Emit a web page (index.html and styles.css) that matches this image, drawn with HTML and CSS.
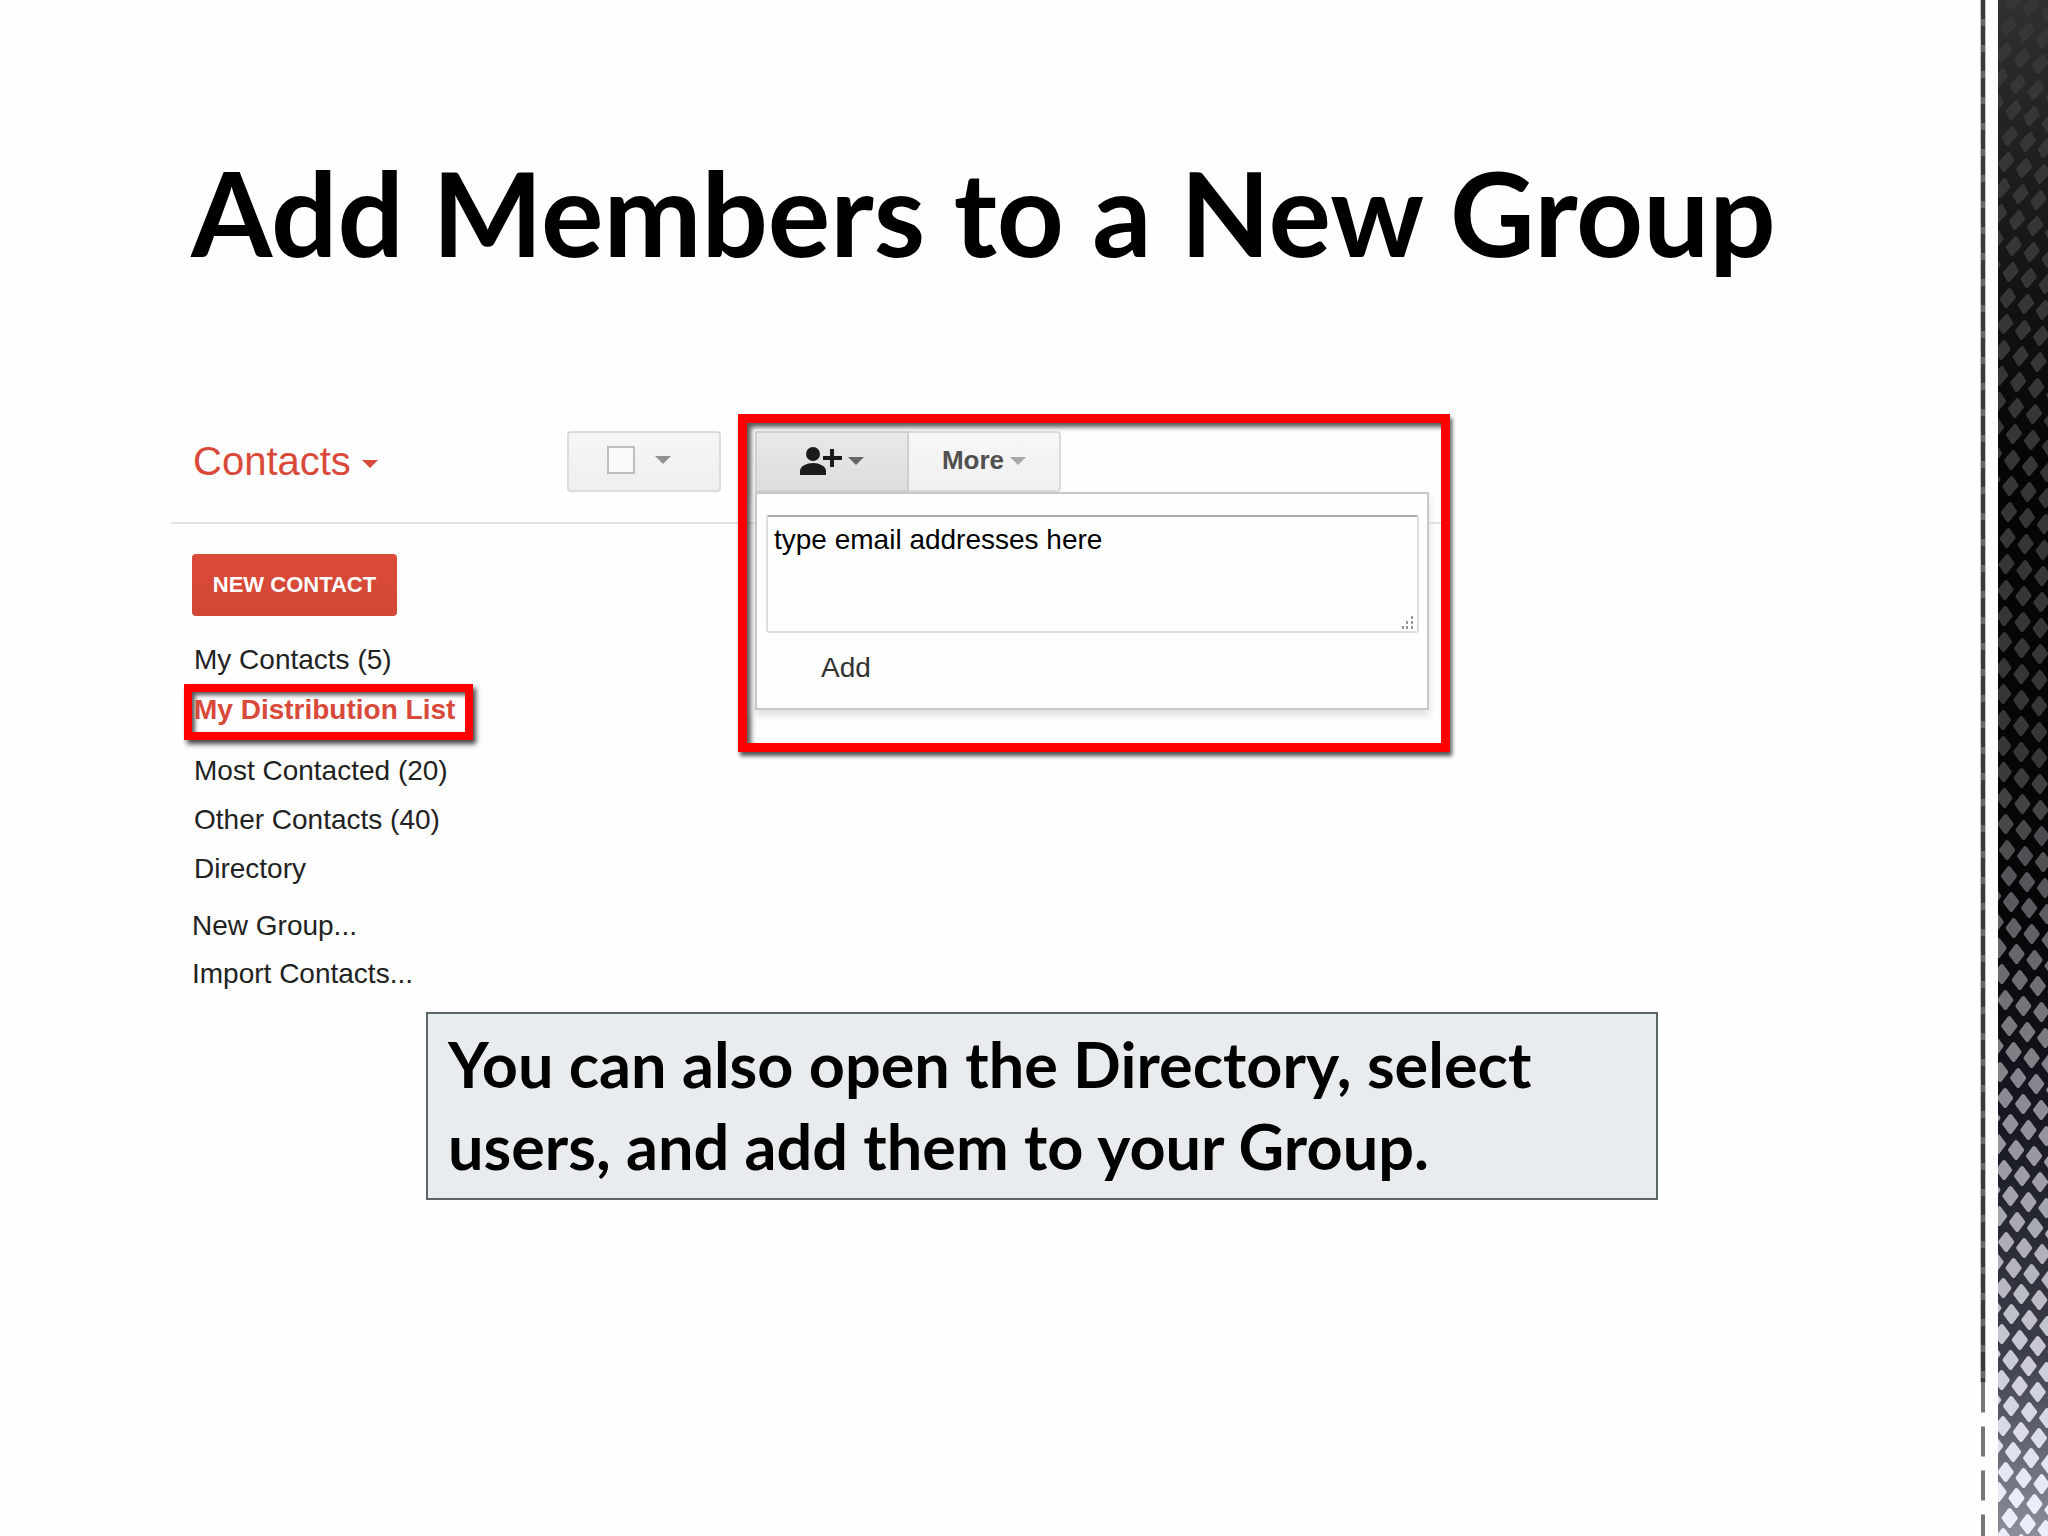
FILE: index.html
```html
<!DOCTYPE html>
<html lang="en">
<head>
	<meta charset="UTF-8">
	<meta name="viewport" content="width=device-width, initial-scale=1.0">
	<title>Add Members to a New Group</title>
	<link rel="stylesheet" href="styles.css">
</head>
<body>
	<main class="slide">
		<h1 class="title">Add Members to a New Group</h1>
		<section class="app">
			<!-- toolbar -->
			<header class="toolbar">
				<button class="app_name" type="button">Contacts <span class="caret"></span></button>
				<div class="select_box">
					<input class="check" type="checkbox" aria-label="Select all">
					<button class="arrow_btn" type="button" aria-label="Select options"><span class="caret"></span></button>
				</div>
			</header>
			<div class="popup_frame">
				<div class="btn_group">
					<button class="btn btn_add" type="button" aria-label="Add to group">
						<svg class="person" viewBox="0 0 42 28" aria-hidden="true">
							<ellipse cx="13" cy="7" rx="7" ry="7"/>
							<path d="M0 28v-4c0-5 7-8 13-8s13 3 13 8v4z"/>
							<path d="M30 2h4v7h8v4h-8v7h-4v-7h-7V9h7z"/>
						</svg>
						<span class="caret"></span>
					</button>
					<button class="btn btn_more" type="button">More <span class="caret"></span></button>
				</div>
				<div class="popup">
					<textarea class="emails" aria-label="Email addresses">type email addresses here</textarea>
					<button class="add" type="button">Add</button>
				</div>
			</div>
			<!-- sidebar -->
			<nav class="side">
				<button class="new_contact" type="button">NEW CONTACT</button>
				<a class="link" href="#">My Contacts (5)</a>
				<a class="link current" href="#">My Distribution List</a>
				<a class="link" href="#">Most Contacted (20)</a>
				<a class="link" href="#">Other Contacts (40)</a>
				<a class="link" href="#">Directory</a>
				<div class="actions">
					<a class="link" href="#">New Group...</a>
					<a class="link" href="#">Import Contacts...</a>
				</div>
			</nav>
		</section>
		<p class="note">You can also open the Directory, select users, and add them to your Group.</p>
	</main>
	<!-- metal mesh on the right edge -->
	<div class="edge">
		<svg class="mesh" aria-hidden="true"></svg>
	</div>
	<script src="mesh.js"></script>
</body>
</html>
```

FILE: styles.css
```css
* {
	box-sizing: border-box;
	margin: 0;
	padding: 0;
}
body {
	display: flex;
	min-height: 100vh;
	background-color: #fefefe;
	color: #000;
	font-family: "Liberation Sans", Arial, sans-serif;
	font-size: 28px;
}
button,
textarea {
	font: inherit;
	color: inherit;
	background: none;
	border: none;
}
.slide {
	flex: 1;
	padding: 148px 204px 0 171px;
}
.title {
	padding-left: 20px;
	font: bold 117px/128px Lato, sans-serif;
	white-space: nowrap;
}
.caret {
	display: inline-block;
	border: 8px solid transparent;
	border-top-color: currentColor;
	border-bottom: none;
	vertical-align: middle;
}

/* contacts window */
.app {
	display: grid;
	grid-template-columns: 567px 712px;
	grid-template-rows: 110px auto;
	margin-top: 138px;
}
.toolbar {
	grid-area: 1 / 1 / 2 / 3;
	display: flex;
	align-items: flex-start;
	justify-content: space-between;
	padding: 17px 729px 0 22px;
	border-bottom: 2px solid #e2e2e4;
}
.app_name {
	color: #d9493a;
	font-size: 40px;
	line-height: 60px;
}
.select_box {
	display: flex;
	align-items: center;
	gap: 20px;
	width: 154px;
	height: 61px;
	padding: 0 0 4px 38px;
	border: 2px solid #dcdcdc;
	border-radius: 4px;
	background: linear-gradient(#f6f6f6, #efefef);
}
.check {
	appearance: none;
	width: 28px;
	height: 28px;
	border: 2px solid #bdbdbd;
	background-color: #fafafa;
}
.arrow_btn {
	display: flex;
	color: #929292;
}

/* highlighted popup */
.popup_frame {
	grid-area: 1 / 2 / 3 / 3;
	align-self: start;
	height: 338px;
	padding: 8px 12px 0 8px;
	border: 9px solid #f00;
	box-shadow: 2px 4px 4px #555, inset 4px 4px 5px #555;
}
.btn_group {
	display: flex;
}
.btn {
	display: flex;
	align-items: center;
	justify-content: center;
	gap: 6px;
	width: 152px;
	height: 61px;
	padding-bottom: 2px;
	border: 2px solid #dadada;
	background: linear-gradient(#f7f7f7, #f0f0f0);
}
.btn_add {
	width: 154px;
	border-color: #cfcfcf;
	background: linear-gradient(#e9e9e9, #dedcdd);
	color: #666;
}
.btn_more {
	border-left: none;
	border-radius: 0 4px 4px 0;
	color: #505050;
	font-size: 26px;
	font-weight: bold;
}
.btn_more .caret {
	color: #a8a8a8;
}
.person {
	width: 42px;
	height: 28px;
	fill: #1b1b1b;
}
.popup {
	padding: 21px 8px 0 9px;
	height: 218px;
	border: 2px solid #c8c8c8;
	background-color: #fefefe;
	box-shadow: 0 5px 8px #ddd;
}
.emails {
	display: block;
	width: 100%;
	height: 118px;
	padding: 7px 6px;
	border: 2px solid #dedede;
	border-top-color: #aaa;
	border-radius: 3px;
	line-height: 32px;
}
/* dotted grip */
.emails::-webkit-resizer {
	background:
		linear-gradient(#999, #999) 9px 0 / 2px 3px,
		linear-gradient(#999, #999) 4px 5px / 2px 3px,
		linear-gradient(#999, #999) 9px 5px / 2px 3px,
		linear-gradient(#999, #999) 0 10px / 2px 3px,
		linear-gradient(#999, #999) 4px 10px / 2px 3px,
		linear-gradient(#999, #999) 9px 10px / 2px 3px;
	background-repeat: no-repeat;
}
.add {
	padding: 17px 55px;
	color: #333;
	line-height: 36px;
}

/* list of groups */
.side {
	grid-area: 2 / 1 / 3 / 2;
	display: flex;
	flex-direction: column;
	align-items: flex-start;
	padding: 30px 0 0 13px;
}
.new_contact {
	width: 205px;
	height: 62px;
	margin: 0 0 19px 8px;
	border-radius: 4px;
	background: linear-gradient(#dc4a38, #d14736);
	color: #fff;
	font-size: 22px;
	font-weight: bold;
}
.link {
	padding-left: 10px;
	color: #222;
	line-height: 49px;
	text-decoration: none;
}
.current {
	margin-bottom: 6px;
	padding: 0 10px 4px 2px;
	border: 8px solid #f00;
	box-shadow: 3px 4px 5px #444, inset 3px 3px 4px #555;
	color: #d9493a;
	font-weight: bold;
	line-height: 36px;
}
.actions {
	display: flex;
	flex-direction: column;
	padding-top: 9px;
}
.actions .link {
	padding-left: 8px;
	line-height: 48px;
}

/* text box under the window */
.note {
	margin: 14px 118px 0 255px;
	padding: 9px 20px 11px;
	border: 2px solid #5b6669;
	background-color: #e9ecee;
	font: bold 63px/82px Lato, sans-serif;
}

.edge {
	position: relative;
	width: 69px;
}
.mesh {
	position: absolute;
	width: 100%;
	height: 100%;
}
```

FILE: mesh.js
```js
var NS = "http://www.w3.org/2000/svg";
var svg = document.querySelector(".mesh");
var h = svg.getBoundingClientRect().height;

function add(name, attrs) {
	var el = document.createElementNS(NS, name);
	for (var key in attrs) el.setAttribute(key, attrs[key]);
	svg.appendChild(el);
	return el;
}

// dark plate
var grad = add("linearGradient", { id: "plate", x1: 0, y1: 0, x2: 0, y2: 1 });
[[0, "#303030"], [0.12, "#1c1c1c"], [0.3, "#050505"], [0.6, "#060608"], [0.75, "#1a1c26"], [0.88, "#3c3f49"], [1, "#8b8e9b"]].forEach(function (s) {
	var stop = document.createElementNS(NS, "stop");
	stop.setAttribute("offset", s[0]);
	stop.setAttribute("stop-color", s[1]);
	grad.appendChild(stop);
});
add("rect", { x: 18, y: 0, width: 51, height: h, fill: "url(#plate)" });

// holes, lighter towards the bottom
function shade(t) {
	if (t < 0.5) return "rgb(54,54,54)";
	var k = Math.min(1, (t - 0.5) * 2.1);
	return "rgb(" + Math.round(58 + 177 * k) + "," + Math.round(58 + 179 * k) + "," + Math.round(60 + 190 * k) + ")";
}
var y = -20, x = 56;
while (y < h + 60) {
	for (var i = -12; i < 12; i++) {
		var cx = x + i * 18, cy = y + i * 6;
		if (cx < 12 || cx > 78) continue;
		var t = cy / h;
		var skew = Math.max(0, 3 - t * 6);
		var d = "M" + (cx + skew) + " " + (cy - 8) +
			"L" + (cx + 6) + " " + (cy - skew / 2) +
			"L" + (cx - skew) + " " + (cy + 8) +
			"L" + (cx - 6) + " " + (cy + skew / 2) + "Z";
		add("path", { d: d, fill: shade(t), stroke: shade(t), "stroke-width": 4, "stroke-linejoin": "round" });
	}
	x += y < 700 ? (y - 700) / 150 : (y - 700) / 75;
	y += 26;
}
add("rect", { x: 0, y: 0, width: 18, height: h, fill: "#fefefe" });

// thin rail, broken up near the bottom
add("rect", { x: 0, y: 0, width: 6, height: h * 0.9, fill: "#c4c4c4" });
add("rect", { x: 1, y: 0, width: 4, height: h * 0.9, fill: "#666" });
add("line", { x1: 3, y1: 0, x2: 3, y2: h * 0.9, stroke: "#3a3a3a", "stroke-width": 4, "stroke-dasharray": "19 7" });
add("line", { x1: 3, y1: h * 0.9, x2: 3, y2: h, stroke: "#777", "stroke-width": 4, "stroke-dasharray": "30 14" });
```
